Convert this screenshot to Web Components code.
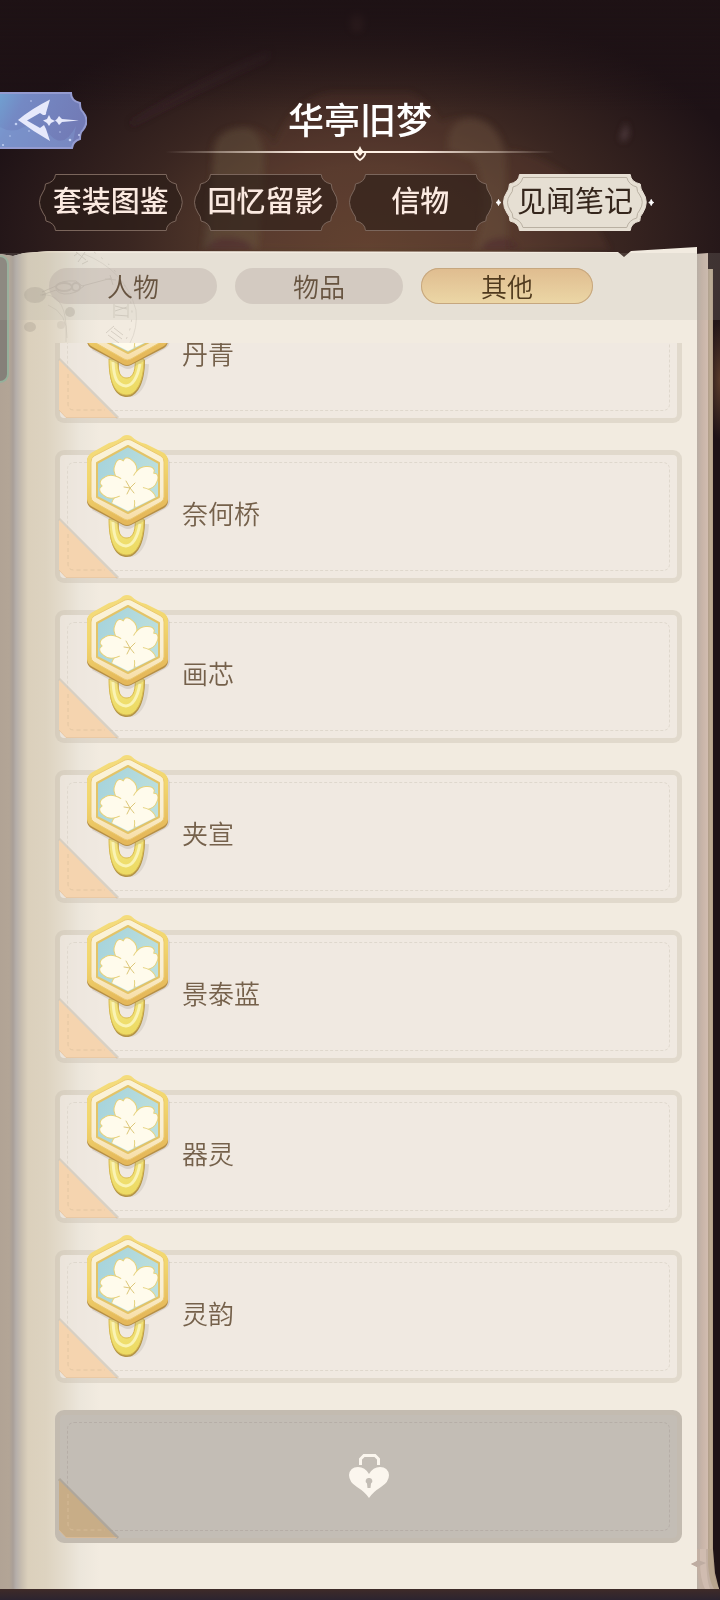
<!DOCTYPE html>
<html lang="zh-CN">
<head>
<meta charset="utf-8">
<meta name="viewport" content="width=device-width, initial-scale=1">
<title>华亭旧梦</title>
<style>
html,body{margin:0;background:#1e1216}
body{font-family:"Noto Sans CJK SC","Noto Sans",sans-serif;-webkit-font-smoothing:antialiased}
</style>
</head>
<body>
<memory-app>
  <back-button slot="back"></back-button>
  <page-title slot="title">华亭旧梦</page-title>
  <chapter-tab slot="tabs">套装图鉴</chapter-tab>
  <chapter-tab slot="tabs">回忆留影</chapter-tab>
  <chapter-tab slot="tabs">信物</chapter-tab>
  <chapter-tab slot="tabs" selected>见闻笔记</chapter-tab>
  <note-book>
    <filter-pill slot="filters">人物</filter-pill>
    <filter-pill slot="filters">物品</filter-pill>
    <filter-pill slot="filters" selected>其他</filter-pill>
    <note-card>丹青</note-card>
    <note-card>奈何桥</note-card>
    <note-card>画芯</note-card>
    <note-card>夹宣</note-card>
    <note-card>景泰蓝</note-card>
    <note-card>器灵</note-card>
    <note-card>灵韵</note-card>
    <locked-card></locked-card>
  </note-book>
</memory-app>
<script>
function define(name, markup, setup) {
  const template = document.createElement('template');
  template.innerHTML = markup;
  customElements.define(name, class extends HTMLElement {
    constructor() {
      super();
      this.attachShadow({ mode: 'open' }).append(template.content.cloneNode(true));
    }
    connectedCallback() { if (setup) setup(this); }
  });
}

define('memory-app', `
<style>
:host{display:flex;flex-direction:column;height:100vh;min-height:900px;box-sizing:border-box;overflow:hidden;position:relative;isolation:isolate;
  background:
    linear-gradient(0deg,#2c2430,#3f2b28 11px,#0000 11px),
    radial-gradient(ellipse 14px 60px at 100% 380px,#5a3c2c,#0000),
    radial-gradient(ellipse 400px 250px at 51% 245px,#60422f 0%,#553a2c 32%,#3a2621 60%,#1e121600 100%),
    #1e1216}
.scene{position:absolute;inset:0 0 auto 0;width:100%;height:250px;z-index:-1}
header{display:grid;grid-template-columns:87px 1fr 87px;align-items:start;padding-top:92px;height:82px}
nav{display:flex;gap:11px;padding:0 73px 0 39px;height:57px;margin-bottom:16px}
::slotted(chapter-tab){flex:1}
::slotted(note-book){flex:1;min-height:0}
</style>
<svg class="scene" viewBox="0 0 720 250" preserveAspectRatio="none" aria-hidden="true">
  <defs>
    <filter id="b"><feGaussianBlur stdDeviation="3"/></filter>
    <linearGradient id="d" x2="0" y2="1"><stop stop-color="#1e1215"/><stop offset="1" stop-color="#1e1215" stop-opacity="0"/></linearGradient>
  </defs>
  <g filter="url(#b)">
    <path d="M212 250V150Q214 128 245 127Q268 128 274 146Q290 100 330 92H410Q430 100 440 122Q495 105 505 150Q530 150 570 176L610 250Z" fill="#6a4534" opacity=".22"/>
    <path d="M214 158Q214 127 246 128Q262 130 264 160L258 250H203Z" fill="#77705a" opacity=".22"/>
    <path d="M448 150Q446 120 470 118Q498 120 506 158L508 250H474Q492 200 474 160Z" fill="#78604c" opacity=".28"/>
    <path d="M130 122Q200 78 270 50L268 60Q200 90 132 126Z" fill="#3b2b33" opacity=".4"/>
    <path d="M205 250Q212 235 232 237Q250 239 254 250M480 250Q486 235 510 238L522 250" fill="#49262a" opacity=".5"/>
    <path d="M620 138l6-16 3 12-5 8Z" fill="#5b474b" opacity=".7"/>
    <ellipse cx="357" cy="22" rx="7" ry="10" fill="#5a3c38" opacity=".7"/>
  </g>
  <rect width="720" height="110" fill="url(#d)"/>
</svg>
<header><slot name="back"></slot><slot name="title"></slot></header>
<nav aria-label="章节"><slot name="tabs"></slot></nav>
<slot></slot>`);

define('back-button', `
<style>
:host{display:block;width:87px;height:57px}
button{all:unset;display:block;cursor:pointer}
svg{display:block}
</style>
<button aria-label="返回"><svg width="87" height="57" viewBox="0 0 87 57">
  <defs><linearGradient id="g" x2="1" y2=".35"><stop stop-color="#70a2d2"/><stop offset=".3" stop-color="#7489c4"/><stop offset="1" stop-color="#727bb6"/></linearGradient></defs>
  <path d="M-2 1H71Q71 9 80 11Q80 18 83 20Q90 29 83 38Q80 40 80 47Q73 49 72 56H-2Z" fill="url(#g)" stroke="#949bd0" stroke-width="2"/>
  <path d="M0 35Q12 42 24 35T50 43T76 34L72 55H0Z" fill="#87aee0" opacity=".28"/>
  <path fill="#e6e9fb" fill-rule="evenodd" d="M18 28Q31 17 50 7.500L46 21Q47 23 43 23L40 21L27 28.500L40 36L44 33L46 37L50 49Q34 40 18 28Z M43 28.500L47 27L49 23L51 27L55 29L51 31L49 34L47 31Z M55 28.500L57 27L59 24L62 27L79 28.500L62 30L59 33L57 30Z"/>
  <g fill="#d6e2ff" opacity=".8"><circle cx="16" cy="32" r="1.300"/><circle cx="31" cy="9" r=".8"/><circle cx="70" cy="48" r="1.300"/><circle cx="79" cy="43" r="1"/><circle cx="29" cy="39" r=".8"/><circle cx="3" cy="53" r="1"/><circle cx="60" cy="40" r=".7"/><circle cx="10" cy="44" r=".7"/></g>
</svg></button>`);

define('page-title', `
<style>
:host{display:block;text-align:center;color:#fff}
h1{margin:0;padding-bottom:2px;font-size:36px;line-height:52px;font-weight:500}
.rule{display:grid;grid-template-columns:1fr 14px 1fr;align-items:center;max-width:390px;height:12px;margin:0 auto}
i{height:2px;background:linear-gradient(90deg,#fff0e400,#fff0e4 75%)}
i:last-child{background:linear-gradient(270deg,#fff0e400,#fff0e4 75%)}
svg{display:block;overflow:visible}
</style>
<h1><slot></slot></h1>
<div class="rule" aria-hidden="true"><i></i><svg width="14" height="12" viewBox="0 0 14 12"><path d="M0 5H14V7H0Z M7 0Q8 3 10.500 5.500Q9 8 7 10Q5 8 3.500 5.500Q6 3 7 0Z" fill="#fff3e7"/><path d="M1.500 6Q2 11 7 14Q12 11 12.500 6" fill="none" stroke="#fff3e7" stroke-width="2"/></svg><i></i></div>`);

define('chapter-tab', `
<style>
:host{display:block;position:relative}
button{all:unset;box-sizing:border-box;display:grid;place-items:center;width:100%;height:57px;cursor:pointer;color:#fbeae1;font-size:29px;line-height:50px;white-space:nowrap;font-weight:500}
span{grid-area:1/1;align-self:start;z-index:1}
svg{grid-area:1/1;width:100%;height:57px;overflow:visible}
.frame{fill:#2a1c1899;stroke:#7b665c;stroke-width:1}
.inner,.star{display:none}
:host([selected]) button{color:#35261c;font-weight:400}
:host([selected]) .frame{fill:#e6dfd3;stroke:#e9e1d6}
:host([selected]) .inner{display:inline;fill:none;stroke:#b9b0a2;stroke-width:1}
:host([selected]) .star{display:inline;fill:#fff}
</style>
<button role="tab"><svg viewBox="0 0 144 57" preserveAspectRatio="none" aria-hidden="true">
<path class="frame" d="M16.500.5H127.500Q128 8 137.500 10Q138 16 140 18Q147 28 140 39Q137 42 137 47Q128 49 127.500 56.500H16.500Q16 49 7 47Q7 42 4 39Q-3 28 4 18Q6 16 6.500 10Q16 8 16.500.5Z"/>
<path class="inner" d="M20 3.500H124Q126 11 134 13Q134 18 137 21Q142 28 137 36Q134 39 134 44Q126 46 124 53.500H20Q18 46 10 44Q10 39 7 36Q2 28 7 21Q10 18 10 13Q18 11 20 3.500Z"/>
<path class="star" d="M-4.500 25.500Q-4 28-2 28.500Q-4 29-4.500 31.500Q-5 29-7 28.500Q-5 28-4.500 25.500ZM148.500 25.500Q149 28 151 28.500Q149 29 148.500 31.500Q148 29 146 28.500Q148 28 148.500 25.500Z" style="stroke:#fff"/>
</svg><span><slot></slot></span></button>`,
el => el.shadowRoot.querySelector('button').setAttribute('aria-selected', el.hasAttribute('selected')));

define('filter-pill', `
<style>
:host{display:block}
button{all:unset;box-sizing:border-box;width:100%;height:36px;border-radius:18px;background:#b7aba366;color:#675440;text-align:center;font-size:26px;line-height:30px;cursor:pointer;font-weight:350}
:host([selected]) button{background:linear-gradient(#dfbc8f,#ecd7a6);box-shadow:inset 0 0 0 1px #c6a77f;color:#503a1e}
</style>
<button role="tab"><slot></slot></button>`,
el => el.shadowRoot.querySelector('button').setAttribute('aria-selected', el.hasAttribute('selected')));

define('note-book', `
<style>
:host{display:flex;flex-direction:column;position:relative;isolation:isolate}
.paper{position:absolute;inset:0 0 11px 0;z-index:-2;
  clip-path:polygon(0 7px,13px 9px,24px 6px,50px 4px,calc(100% - 102px) 5px,calc(100% - 96px) 10px,calc(100% - 89px) 4px,calc(100% - 23px) 0,calc(100% - 23px) 7px,calc(100% - 12px) 6px,calc(100% - 12px) 22px,calc(100% - 7px) 22px,calc(100% - 7px) calc(100% - 40px),calc(100% - 5px) calc(100% - 16px),calc(100% - 1px) 100%,0 100%);
  background:
   linear-gradient(90deg,#b1a395 0,#b3a596 9px,#a99f98 13px,#b5aeaa 16px,#c9bfb0 22px,#dbd0bc 28px,#ddd3c0 46px,#e4dccd 64px,#ece6db 80px,#f2ebe000 100px),
   linear-gradient(90deg,#f2ebe0 0,#f2ebe0 calc(100% - 23px),#b9aea4 calc(100% - 23px),#c8b4a8 calc(100% - 18px),#d2bdb0 calc(100% - 12px),#b09d89 calc(100% - 12px),#c0ae94 calc(100% - 9px),#b09c86 calc(100% - 7px))}
.curl{position:absolute;right:0;bottom:11px;z-index:-1}
.clock{position:absolute;left:20px;top:0;z-index:-1}
.marker{position:absolute;left:0;top:8px;width:9px;height:128px;box-sizing:border-box;border:solid #95b09b;border-width:2px 2px 2px 0;border-radius:0 9px 9px 0;background:#858079;z-index:-1}
.filters{display:grid;grid-template-columns:168fr 168fr 172fr;column-gap:18px;margin-top:6px;padding:15px 127px 16px 49px;background:#b4afa82e}
.list{flex:1;min-height:0;margin-top:23px;display:flex;flex-direction:column;justify-content:flex-end;gap:27px;padding:0 38px 57px 55px;overflow:hidden}
</style>
<div class="paper"></div>
<div class="marker"></div>
<svg class="clock" width="124" height="96" viewBox="20 247 124 96" aria-hidden="true">
 <g fill="none" stroke="#9d9488" opacity=".33">
  <path d="M84 254Q125 270 136 310Q138 328 130 343" opacity=".6"/><path d="M94 252Q130 278 132 312Q132 330 124 343" stroke-dasharray="2 7"/>
  <path d="M76 252l10 8M85 252l-7 10M74 256l4-3M82 264l6-3M105 279l11 1M110 275l3 10"/>
  <path d="M115 306l12 3M115 311l12-4M115 315l13 1M114 304v14M128 304v14M108 335l11 8M111 331l11 8M114 328l9 7M106 333l8-7"/>
  <path d="M40 295Q64 292 66 325V342M48 305Q68 313 67 338" opacity=".6"/>
  <path d="M42 292L56 286Q60 280 76 281L82 286L112 278M42 295L56 290Q62 297 76 292L84 286"/>
  <ellipse cx="64" cy="287" rx="8" ry="4" stroke-width="2"/><circle cx="76" cy="287" r="4" stroke-width="2"/>
 </g>
 <g fill="#a69c8f" opacity=".35"><ellipse cx="35" cy="295" rx="11" ry="8"/><circle cx="70" cy="312" r="5"/><ellipse cx="30" cy="327" rx="6" ry="5"/><circle cx="61" cy="325" r="4" opacity=".5"/></g>
</svg>
<svg class="curl" width="30" height="40" viewBox="0 0 30 40" aria-hidden="true"><path d="M7 0V12L1 15L7 18Q8 32 11 40H29Q23 32 23 15V0Z" fill="#c3b0a3"/><path d="M10 0V12Q10 30 15 40H20Q16 30 16 0Z" fill="#d0bcb0"/><path d="M18 0V15Q19 32 24 40H29Q24 32 23 15V0Z" fill="#b8a58e"/><path d="M1 15Q6 13 8 11L16 14L7 18Z" fill="#beaca1"/></svg>
<div class="filters" role="tablist" aria-label="分类"><slot name="filters"></slot></div>
<div class="list"><slot></slot></div>`);

const cardFrame = `
:host{display:block;flex:none}
button{all:unset;box-sizing:border-box;position:relative;display:flex;width:100%;height:133px;cursor:pointer;border:5px solid #c8bdb066;border-radius:9px;background:#efe8e1b8 padding-box}
button::before{content:"";position:absolute;inset:7px;border:1px dashed #dfd8cd;border-radius:7px}
.fold{position:absolute;left:-1px;bottom:0;overflow:visible}`;
const fold = (fill, line) => `<svg class="fold" width="60" height="60" viewBox="0 0 60 60" aria-hidden="true"><path d="M0 1L59 60" fill="none" stroke="${line}" stroke-width="3" opacity=".7"/><path d="M0 2L57 59.500H7L0 52Z" fill="${fill}"/><path d="M0 52L7 59.500H58" fill="none" stroke="#e4bd90" opacity=".6"/><path d="M9 16V46Q9 52 15 52H46" fill="none" stroke="#dcc09c" stroke-dasharray="4 3" opacity=".7"/></svg>`;

define('flower-badge', `
<style>:host{display:block;width:100px;height:140px}svg{display:block}</style>
<svg width="100" height="140" viewBox="0 0 100 140" aria-hidden="true">
 <defs>
  <linearGradient id="rim" x2=".2" y2="1"><stop stop-color="#f5de80"/><stop offset=".5" stop-color="#f2d66c"/><stop offset="1" stop-color="#e5b85a"/></linearGradient>
  <linearGradient id="pale" x2="0" y2="1"><stop stop-color="#fbf3d8"/><stop offset=".65" stop-color="#f9eed2"/><stop offset="1" stop-color="#f7dda4"/></linearGradient>
  <linearGradient id="sky" x2="1" y2=".5"><stop stop-color="#a4d2dc"/><stop offset="1" stop-color="#bde0dd"/></linearGradient>
  <linearGradient id="ring" x2=".3" y2="1"><stop stop-color="#f3e484"/><stop offset="1" stop-color="#eddb64"/></linearGradient>
  <clipPath id="w"><path d="M48 21L78 37V70L48 85L18 70V37Z"/></clipPath>
  <path id="p" d="M50 62C41 56 35 43 41 36Q44 31 48 32L50 34L52 32Q56 31 59 36C65 43 59 56 50 62Z"/>
 </defs>
 <path d="M33 98C33 136 64 140 66 98" fill="none" stroke="#9c948b" stroke-width="6" opacity=".22"/>
 <path fill="#b39447" fill-rule="evenodd" d="M29 94C29 122 37 131 47 131C57 131 65 118 65 94Z M39 92C38 108 41 113 47 113C54 113 56 102 55 92Z"/>
 <path fill="url(#ring)" stroke="#d9bb4e" stroke-width="1" fill-rule="evenodd" d="M29 93C29 120 37 129 47 129C56 129 64 116 64 93Z M38 91C37 106 40 112 47 112C54 112 56 102 55 91Z"/>
 <path d="M33 96C34 113 37 119 46 120Q56 119 60 98" fill="none" stroke="#faf3b4" stroke-width="3"/>
 <path d="M50 12L86 31Q90 34 90 38V74Q90 79 86 82L52 102Q48 104 44 102L12 84Z" fill="#8e8579" opacity=".22"/>
 <path d="M43 11Q47 9 51 11Q57 17 66 19L84 28Q88 31 88 36V75Q88 79 84 82L51 99Q47 101 43 99L11 82Q7 79 7 75V36Q7 31 11 28L29 18Q38 16 43 11Z" fill="#b68f45"/>
 <path d="M43 10Q47 8 51 10Q57 16 66 18L84 27Q88 30 88 35V73Q88 77 84 80L51 98Q47 100 43 98L11 80Q7 77 7 73V35Q7 30 11 27L29 17Q38 15 43 10Z" fill="url(#rim)"/>
 <path d="M45 14Q48 13 51 14L81 30Q84 32 84 36V71Q84 74 81 76L51 93Q47 95 44 93L14 76Q11 74 11 71V36Q11 32 14 30Z" fill="url(#pale)" stroke="#ebc970"/>
 <path d="M48 20L79 37V71L48 87L17 71V37Z" fill="url(#sky)" stroke="#e3c468" stroke-width="2" stroke-linejoin="round"/>
 <g clip-path="url(#w)"><g fill="#fffbec" stroke="#e6d27d" stroke-width="1">
  <use href="#p" transform="rotate(-14 50 62)"/><use href="#p" transform="rotate(58 50 62)"/><use href="#p" transform="rotate(130 50 62)"/><use href="#p" transform="rotate(202 50 62)"/><use href="#p" transform="rotate(274 50 62)"/></g>
  <circle cx="50" cy="62" r="13" fill="#fffbec"/>
  <path d="M50 62L46 55M50 62L55 57M50 62L54 67M50 62L47 68M50 62L44 61" stroke="#dcc678" stroke-linecap="round"/></g>
</svg>`);

define('note-card', `
<style>${cardFrame}
flower-badge{flex:none;margin:-29px 2px 0 20px;position:relative}
span{position:relative;align-self:center;padding-bottom:7px;color:#75614b;font-size:26px;line-height:38px;font-weight:350}
</style>
<button>${fold('#f5d4af', '#cfc6b8')}<flower-badge></flower-badge><span><slot></slot></span></button>`);

define('locked-card', `
<style>${cardFrame}
button{background:#c3bdb5;border-color:#c3bbb0;align-items:center;justify-content:center}
button::before{border-color:#b6aea7}
.lock{position:relative;padding-bottom:2px}
</style>
<button aria-label="未解锁">${fold('#c8ad87', '#a79e91')}
<svg class="lock" width="42" height="46" viewBox="0 0 42 46" aria-hidden="true"><path d="M12.500 12V6L16 2.500H27L30.500 6V12" fill="none" stroke="#fbf6ee" stroke-width="3"/><path fill="#fbf6ee" fill-rule="evenodd" d="M21 45Q17 39 9 34Q1 29 1 22Q2 14 10 14Q17 14 21 21Q25 14 32 14Q40 14 41 22Q41 29 33 34Q25 39 21 45Z M21 25a3 3 0 0 0-2 5.500L19.500 35h3L23 30.500A3 3 0 0 0 21 25Z"/></svg></button>`);
</script>
</body>
</html>
